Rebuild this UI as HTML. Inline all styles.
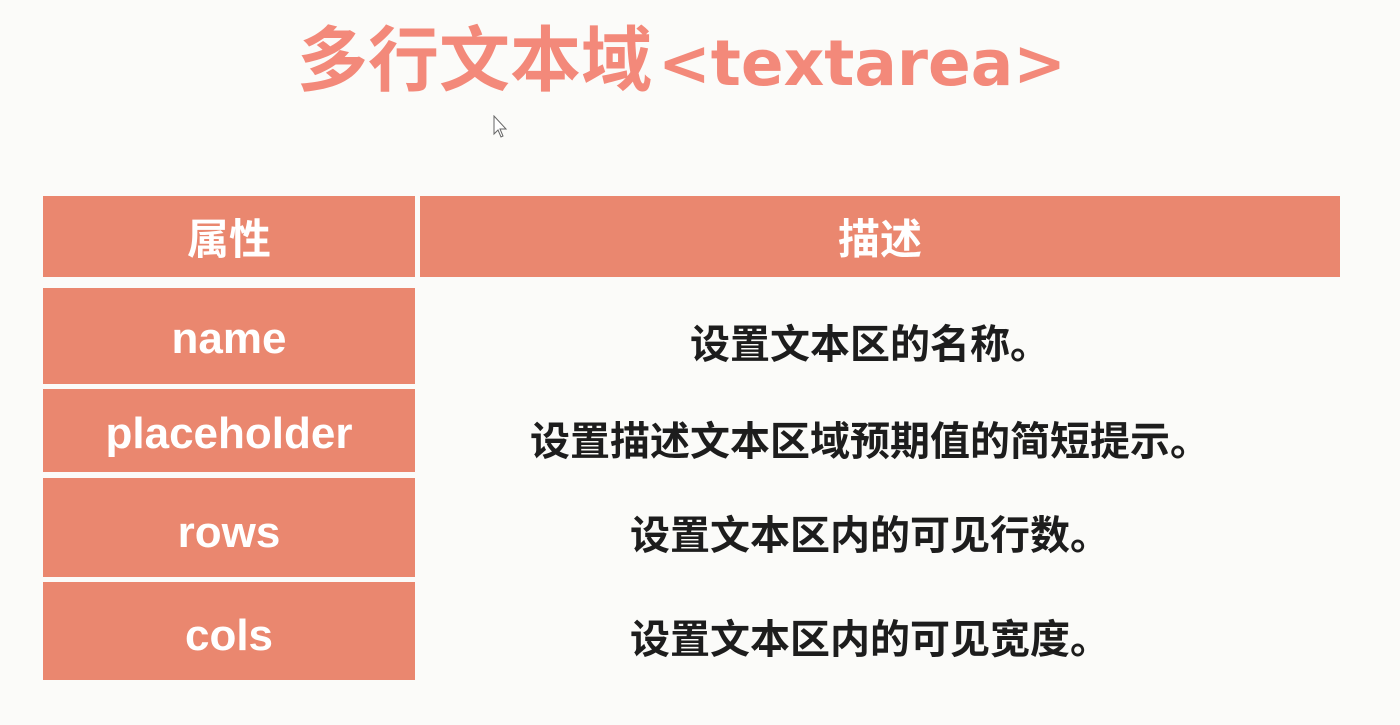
<!DOCTYPE html>
<html><head><meta charset="utf-8"><style>
body{margin:0;width:1400px;height:725px;background:#fbfbf9;position:relative;overflow:hidden;font-family:"Liberation Sans","Noto Sans CJK SC",sans-serif;}
.t{position:absolute;left:297px;top:4px;white-space:nowrap;font-size:71px;font-weight:bold;color:#f3897a;}
.t span{font-family:"DejaVu Sans","Liberation Sans",sans-serif;font-weight:bold;letter-spacing:0px;font-size:63px;margin-left:6px;}
.c{position:absolute;background:#ea876f;color:#fff;font-weight:bold;display:flex;align-items:center;justify-content:center;font-size:44px;}
.d{position:absolute;left:410px;width:920px;display:flex;align-items:center;justify-content:center;font-size:40px;font-weight:bold;color:#1d1d1d;}
.h{font-size:42px;}
</style></head><body>
<div class="t">多行文本域<span>&lt;textarea&gt;</span></div>
<svg style="position:absolute;left:493px;top:115px" width="16" height="24" viewBox="0 0 16 24"><path d="M1 1 L1 19 L5 15 L8 22 L10 21 L7 14 L13 14 Z" fill="#fff" stroke="#666" stroke-width="1"/></svg>
<div class="c h" style="left:43px;top:196px;width:372px;height:81px">属性</div>
<div class="c h" style="left:420px;top:196px;width:920px;height:81px">描述</div>
<div class="c" style="left:43px;top:288px;width:372px;height:96px;padding-top:6px;box-sizing:border-box">name</div>
<div class="c" style="left:43px;top:389px;width:372px;height:83px;padding-top:6px;box-sizing:border-box">placeholder</div>
<div class="c" style="left:43px;top:478px;width:372px;height:99px;padding-top:10px;box-sizing:border-box">rows</div>
<div class="c" style="left:43px;top:582px;width:372px;height:98px;padding-top:10px;box-sizing:border-box">cols</div>
<div class="d" style="top:288px;height:106px">设置文本区的名称。</div>
<div class="d" style="top:389px;height:98px">设置描述文本区域预期值的简短提示。</div>
<div class="d" style="top:478px;height:108px">设置文本区内的可见行数。</div>
<div class="d" style="top:582px;height:108px">设置文本区内的可见宽度。</div>
</body></html>
